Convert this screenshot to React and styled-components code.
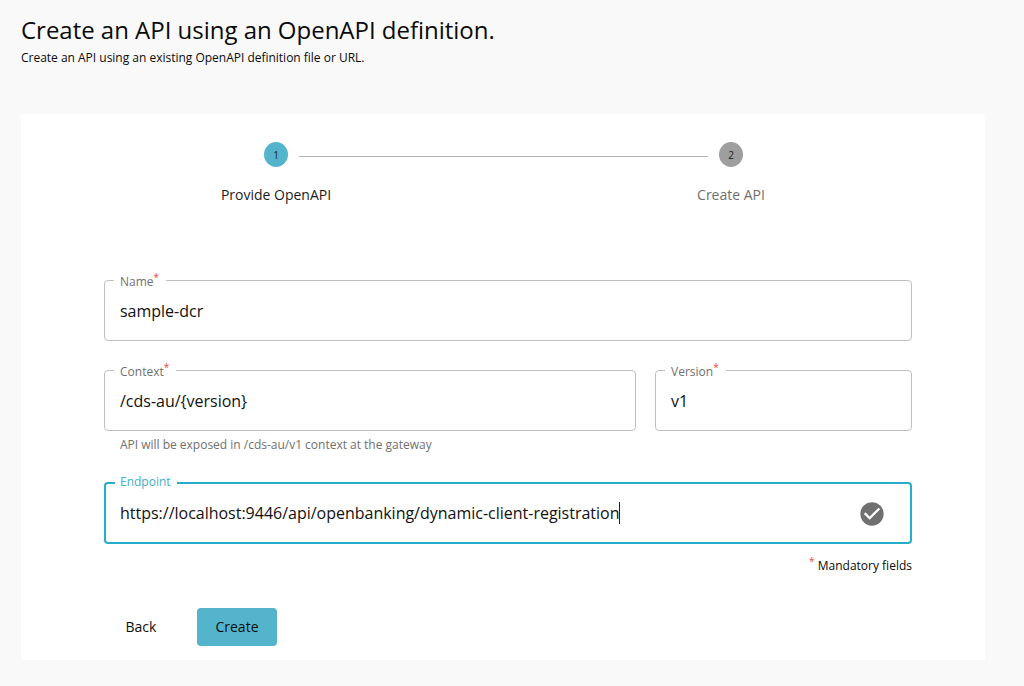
import React from 'react';
import styled, { createGlobalStyle } from 'styled-components';

const GlobalStyle = createGlobalStyle`
  *, *::before, *::after { box-sizing: border-box; }
  body {
    margin: 0;
    background: #f9f9f9;
    color: #0a0a0a;
    font-family: 'Open Sans', 'Noto Sans', sans-serif;
  }
`;

const Page = styled.main`
  height: 686px;
  padding: 14px 39px 0 21px;
  overflow: hidden;
`;

const Header = styled.header`
  height: 100px;
`;

const Title = styled.h1`
  margin: 0;
  font-size: 24px;
  font-weight: 400;
  letter-spacing: -0.02px;
  line-height: 31px;
  white-space: nowrap;
`;

const Subtitle = styled.p`
  margin: 4px 0 0;
  font-size: 12px;
  letter-spacing: -0.01px;
  line-height: 17px;
`;

const Card = styled.section`
  height: 546px;
  padding: 28px 73px 0 83px;
  background: #fff;
`;

const Stepper = styled.ol`
  display: flex;
  align-items: flex-start;
  margin: 0;
  padding: 0 147px 0 104px;
  height: 138px;
  list-style: none;
`;

const Step = styled.li`
  display: flex;
  flex-direction: column;
  align-items: center;
  flex: none;
  width: ${({ $width }) => $width}px;
  color: ${({ $active }) => ($active ? '#1c1c1c' : '#707070')};
  font-size: 14px;
  line-height: 20px;
  white-space: nowrap;
`;

const StepBadge = styled.span`
  display: flex;
  align-items: center;
  justify-content: center;
  width: 24px;
  height: 25px;
  margin-bottom: 18px;
  border-radius: 50%;
  background: ${({ $active }) => ($active ? '#54b4cc' : '#9e9e9e')};
  color: #1a1a1a;
  font-size: 10px;
`;

const StepLine = styled.li`
  flex: 1;
  height: 1px;
  margin: 14px -11px 0 -45px;
  background: #b5b5b5;
`;

const Row = styled.div`
  display: grid;
  grid-template-columns: ${({ $columns }) => $columns || '1fr'};
  column-gap: 19px;
  margin-bottom: ${({ $gap }) => $gap || 0}px;
`;

const Outline = styled.div`
  position: relative;
  display: flex;
  align-items: center;
  justify-content: space-between;
  height: ${({ $focused }) => ($focused ? 62 : 61)}px;
  padding: 0 ${({ $focused }) => ($focused ? '24px 0 14px' : '15px')};
  border: ${({ $focused }) => ($focused ? '2px solid #25adc9' : '1px solid #bfbfbf')};
  border-radius: 4px;
`;

const Label = styled.label`
  position: absolute;
  top: ${({ $focused }) => ($focused ? -11 : -8)}px;
  left: 9px;
  padding: 0 ${({ $focused }) => ($focused ? '6px 0 5px' : '7px 0 6px')};
  background: #fff;
  color: ${({ $focused }) => ($focused ? '#3fb0ca' : '#707070')};
  font-size: 12px;
  line-height: 18px;
`;

const Star = styled.span`
  position: relative;
  top: -5px;
  color: #f0443c;
  font-size: 10px;
  line-height: 1;
`;

const Value = styled.span`
  display: flex;
  align-items: center;
  color: #111;
  font-size: 16px;
  letter-spacing: -0.01px;
  line-height: 22px;
  white-space: nowrap;
`;

const Caret = styled.span`
  width: 1px;
  height: 22px;
  margin-left: -0.5px;
  background: #222;
`;

const Helper = styled.p`
  margin: 5px 0 0 16px;
  color: #707070;
  font-size: 12px;
  letter-spacing: -0.01px;
  line-height: 17px;
`;

const Mandatory = styled.p`
  margin: 13px 0 0;
  font-size: 12px;
  line-height: 18px;
  text-align: right;
`;

const Actions = styled.div`
  display: flex;
  align-items: center;
  margin-top: 33px;
`;

const Button = styled.button`
  height: 38px;
  width: ${({ $primary }) => ($primary ? 80 : 74)}px;
  margin-right: 19px;
  padding: 0 0 1px;
  border: 0;
  border-radius: 4px;
  background: ${({ $primary }) => ($primary ? '#54b4cc' : 'transparent')};
  color: #0e0e0e;
  font-family: inherit;
  font-size: 14px;
`;

const StatusIcon = styled.svg`
  flex: none;
  margin-top: 1px;
`;

function CheckIcon() {
  return (
    <StatusIcon width="28" height="28" viewBox="0 0 24 24" aria-hidden="true">
      <path
        fill="#707070"
        d="M12 2C6.48 2 2 6.48 2 12s4.48 10 10 10 10-4.48 10-10S17.52 2 12 2zm-2 15-5-5 1.41-1.41L10 14.17l7.59-7.59L19 8l-9 9z"
      />
    </StatusIcon>
  );
}

function Field({ label, value, required, focused }) {
  return (
    <Outline $focused={focused}>
      <Label $focused={focused}>
        {label}
        {required && <Star>*</Star>}
      </Label>
      <Value>
        {value}
        {focused && <Caret />}
      </Value>
      {focused && <CheckIcon />}
    </Outline>
  );
}

export default function App() {
  return (
    <>
      <GlobalStyle />
      <Page>
        <Header>
          <Title>Create an API using an OpenAPI definition.</Title>
          <Subtitle>Create an API using an existing OpenAPI definition file or URL.</Subtitle>
        </Header>
        <Card>
          <Stepper>
            <Step $active $width={136}>
              <StepBadge $active>1</StepBadge>
              Provide OpenAPI
            </Step>
            <StepLine />
            <Step $width={68}>
              <StepBadge>2</StepBadge>
              Create API
            </Step>
          </Stepper>
          <Row $gap={29}>
            <Field label="Name" value="sample-dcr" required />
          </Row>
          <Row $columns="532px 257px" $gap={29}>
            <div>
              <Field label="Context" value="/cds-au/{version}" required />
              <Helper>API will be exposed in /cds-au/v1 context at the gateway</Helper>
            </div>
            <Field label="Version" value="v1" required />
          </Row>
          <Row>
            <Field
              label="Endpoint"
              value="https://localhost:9446/api/openbanking/dynamic-client-registration"
              focused
            />
          </Row>
          <Mandatory>
            <Star>*</Star> Mandatory fields
          </Mandatory>
          <Actions>
            <Button>Back</Button>
            <Button $primary>Create</Button>
          </Actions>
        </Card>
      </Page>
    </>
  );
}
